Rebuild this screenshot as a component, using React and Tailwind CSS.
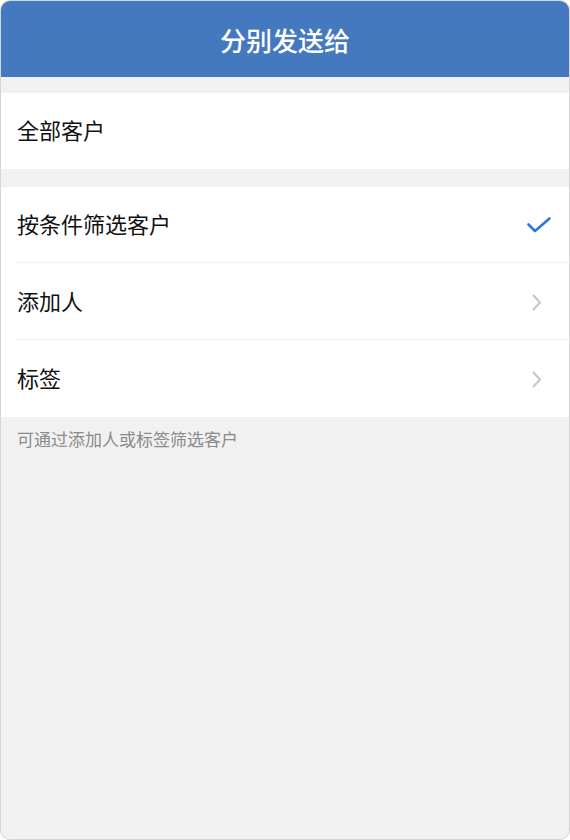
import React from 'react';

const font = { fontFamily: '"Noto Sans CJK SC", "Noto Sans", sans-serif' };

const Check = () => (
    <svg width="24" height="16" viewBox="0 0 24 16" fill="none">
        <path d="M1.5 7.5 L8 14 L22.5 1.5" stroke="#2f77d6" strokeWidth="2.6" strokeLinecap="round" strokeLinejoin="round" />
    </svg>
);

const Chevron = () => (
    <svg width="10" height="17" viewBox="0 0 10 17" fill="none">
        <path d="M1.5 1.5 L8 8.5 L1.5 15.5" stroke="#c6c6c6" strokeWidth="2" strokeLinecap="round" strokeLinejoin="round" />
    </svg>
);

const Row = ({ label, right, divider }) => (
    <div className="relative flex h-[76px] items-center justify-between pl-4 pr-[18px]">
        <span className="pb-[3px] text-[22px] text-[#111]">{label}</span>
        {right}
        {divider && <div className="absolute bottom-0 left-4 right-0 h-px bg-[#efefef]" />}
    </div>
);

export default function App() {
    return (
        <div className="bg-white" style={font}>
            <div className="flex h-[840px] w-[570px] flex-col overflow-hidden rounded-[10px] border border-[#d5d5d5] bg-[#f1f1f1]">
                {/* header */}
                <div className="flex h-[76px] items-center justify-center bg-[#4478bf]">
                    <h1 className="text-[26px] font-medium text-white">分别发送给</h1>
                </div>

                <div className="mt-4 bg-white">
                    <Row label="全部客户" />
                </div>

                <div className="mt-[18px] bg-white">
                    <Row label="按条件筛选客户" right={<Check />} divider />
                    <div className="h-px" />
                    <Row label="添加人" right={<span className="mr-[9px]"><Chevron /></span>} divider />
                    <div className="h-px" />
                    <Row label="标签" right={<span className="mr-[9px]"><Chevron /></span>} />
                </div>

                <p className="px-4 pt-[11px] text-[17px] leading-[22px] text-[#8a8a8a]">可通过添加人或标签筛选客户</p>
            </div>
        </div>
    );
}
